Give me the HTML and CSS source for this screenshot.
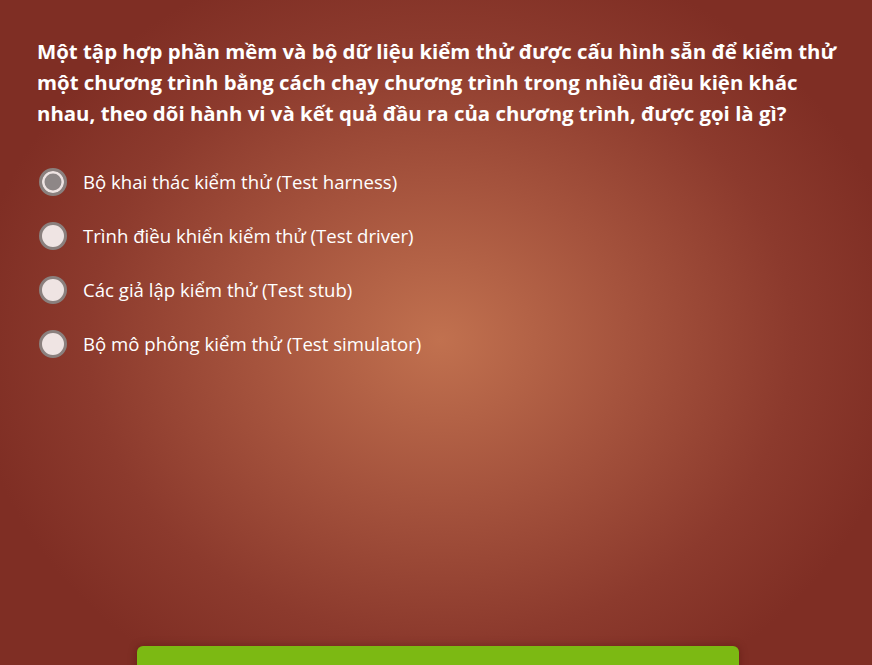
FILE: index.html
```html
<!DOCTYPE html>
<html lang="vi">
<head>
<meta charset="utf-8">
<title>Quiz</title>
<link rel="stylesheet" href="styles.css">
</head>
<body>
<main class="quiz">
  <h1 class="question">Một tập hợp phần mềm và bộ dữ liệu kiểm thử được cấu hình sẵn để kiểm thử một chương trình bằng cách chạy chương trình trong nhiều điều kiện khác nhau, theo dõi hành vi và kết quả đầu ra của chương trình, được gọi là gì?</h1>
  <ul class="options">
    <li class="option"><span class="radio selected"></span><span class="label">Bộ khai thác kiểm thử (Test harness)</span></li>
    <li class="option"><span class="radio"></span><span class="label">Trình điều khiển kiểm thử (Test driver)</span></li>
    <li class="option"><span class="radio"></span><span class="label">Các giả lập kiểm thử (Test stub)</span></li>
    <li class="option"><span class="radio"></span><span class="label">Bộ mô phỏng kiểm thử (Test simulator)</span></li>
  </ul>
  <div class="spacer"></div>
  <div class="submit-row"><button class="submit" type="button"></button></div>
</main>
</body>
</html>
```

FILE: styles.css
```css
html, body {
  margin: 0;
  padding: 0;
  height: 100%;
  overflow: hidden;
}
body {
  background: radial-gradient(ellipse 470px 400px at 440px 340px, #c1714f 0%, #a5533d 40%, #8c3a2d 75%, #7f2e24 100%);
  background-color: #7f2e24;
  font-family: "Open Sans", Lato, sans-serif;
  color: #ffffff;
}
.quiz {
  display: flex;
  flex-direction: column;
  height: 665px;
  padding: 0 24px 0 37px;
  box-sizing: border-box;
}
.question {
  margin: 36px 0 0 0;
  font-size: 20.4px;
  line-height: 31px;
  font-weight: 700;
}
.options {
  list-style: none;
  margin: 39px 0 0 0;
  padding: 0;
  display: flex;
  flex-direction: column;
  gap: 26px;
}
.option {
  display: flex;
  align-items: center;
  gap: 16px;
  height: 28px;
  padding-left: 2px;
}
.radio {
  width: 28px;
  height: 28px;
  box-sizing: border-box;
  border-radius: 50%;
  border: 3px solid #8a807e;
  background: #efe4e3;
  flex: none;
}
.radio.selected {
  background: #8e8787;
  box-shadow: inset 0 0 0 2.5px #efe4e3;
}
.label {
  font-size: 18.6px;
  line-height: 28px;
  color: #ffffff;
}
.spacer {
  flex: 1;
}
.submit-row {
  display: flex;
  padding-left: 100px;
}
.submit {
  width: 602px;
  height: 30px;
  margin-bottom: -11px;
  border: none;
  border-radius: 6px;
  background: #7cb913;
  box-shadow: 0 0 8px rgba(60, 10, 5, 0.35);
}
```
